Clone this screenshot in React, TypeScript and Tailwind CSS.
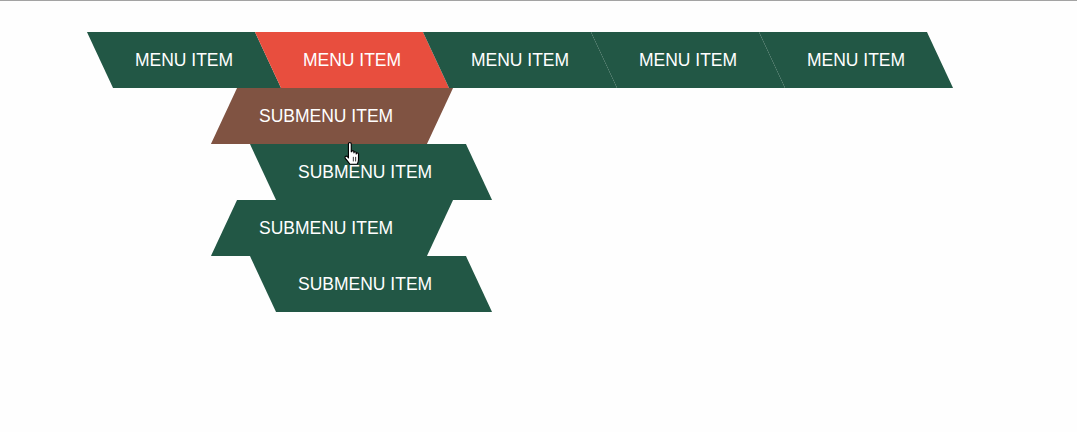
import React from "react";

const font = { fontFamily: '"Liberation Sans", Arial, sans-serif' };

function MainItem({ active, children }: { active?: boolean; children?: React.ReactNode }) {
  return (
    <li className="relative w-[168px] h-[56px]">
      <div
        className={
          "absolute inset-0 skew-x-[25deg] " + (active ? "bg-[#e84e3e]" : "bg-[#225745]")
        }
      />
      <span className="relative flex h-full items-center justify-center text-[17.5px] text-white">
        MENU ITEM
      </span>
      {children}
    </li>
  );
}

function SubItem({ variant }: { variant: "brown-left" | "green-left" | "green-right" }) {
  const shifted = variant === "green-right";
  const skew = shifted ? "skew-x-[25deg]" : "skew-x-[-25deg]";
  const bg = variant === "brown-left" ? "bg-[#805342]" : "bg-[#225745]";
  return (
    <li className={"relative w-[216px] h-[56px] " + (shifted ? "ml-[39px]" : "ml-0")}>
      <div className={"absolute inset-0 " + skew + " " + bg} />
      <span className="relative flex h-full items-center pl-[35.5px] text-[17.5px] text-white whitespace-nowrap">
        SUBMENU ITEM
      </span>
    </li>
  );
}

function HandCursor() {
  return (
    <svg
      className="absolute left-[343px] top-[141px]"
      width="20"
      height="24"
      viewBox="0 0 17 21"
    >
      <path
        d="M4.5 1.5 C4.5 0.8 5 0.5 5.7 0.5 C6.4 0.5 7 0.9 7 1.5 L7 8.5 L7.3 8.5 C7.3 7.8 7.8 7.5 8.3 7.5 C8.8 7.5 9.3 7.8 9.3 8.5 L9.3 9.5 C9.3 8.8 9.8 8.5 10.3 8.5 C10.8 8.5 11.3 8.8 11.3 9.5 L11.3 10.5 C11.3 9.8 11.8 9.5 12.3 9.5 C12.9 9.5 13.3 9.9 13.3 10.5 L13.3 15.5 C13.3 17.2 12.6 18.6 12.1 19.5 L5.8 19.5 C4.8 18 3.3 16.2 1.8 14.3 C1.3 13.6 1.5 12.8 2.1 12.5 C2.8 12.2 3.5 12.6 3.9 13.1 L4.5 14 Z"
        fill="#ffffff"
        stroke="#000000"
        strokeWidth="1"
        strokeLinejoin="round"
      />
      <path d="M8.8 13 L8.8 17 M10.8 13 L10.8 17" stroke="#000" strokeWidth="0.7" />
    </svg>
  );
}

export default function App() {
  return (
    <div className="relative min-h-[432px] bg-[#fefefe] border-t border-[#a3a3a3]" style={font}>
      <nav className="pt-[31px] pl-[100px]">
        <ul className="flex">
          <MainItem />
          <MainItem active>
            <ul className="absolute left-[-44.5px] top-full flex flex-col">
              <SubItem variant="brown-left" />
              <SubItem variant="green-right" />
              <SubItem variant="green-left" />
              <SubItem variant="green-right" />
            </ul>
          </MainItem>
          <MainItem />
          <MainItem />
          <MainItem />
        </ul>
      </nav>
      <HandCursor />
    </div>
  );
}
